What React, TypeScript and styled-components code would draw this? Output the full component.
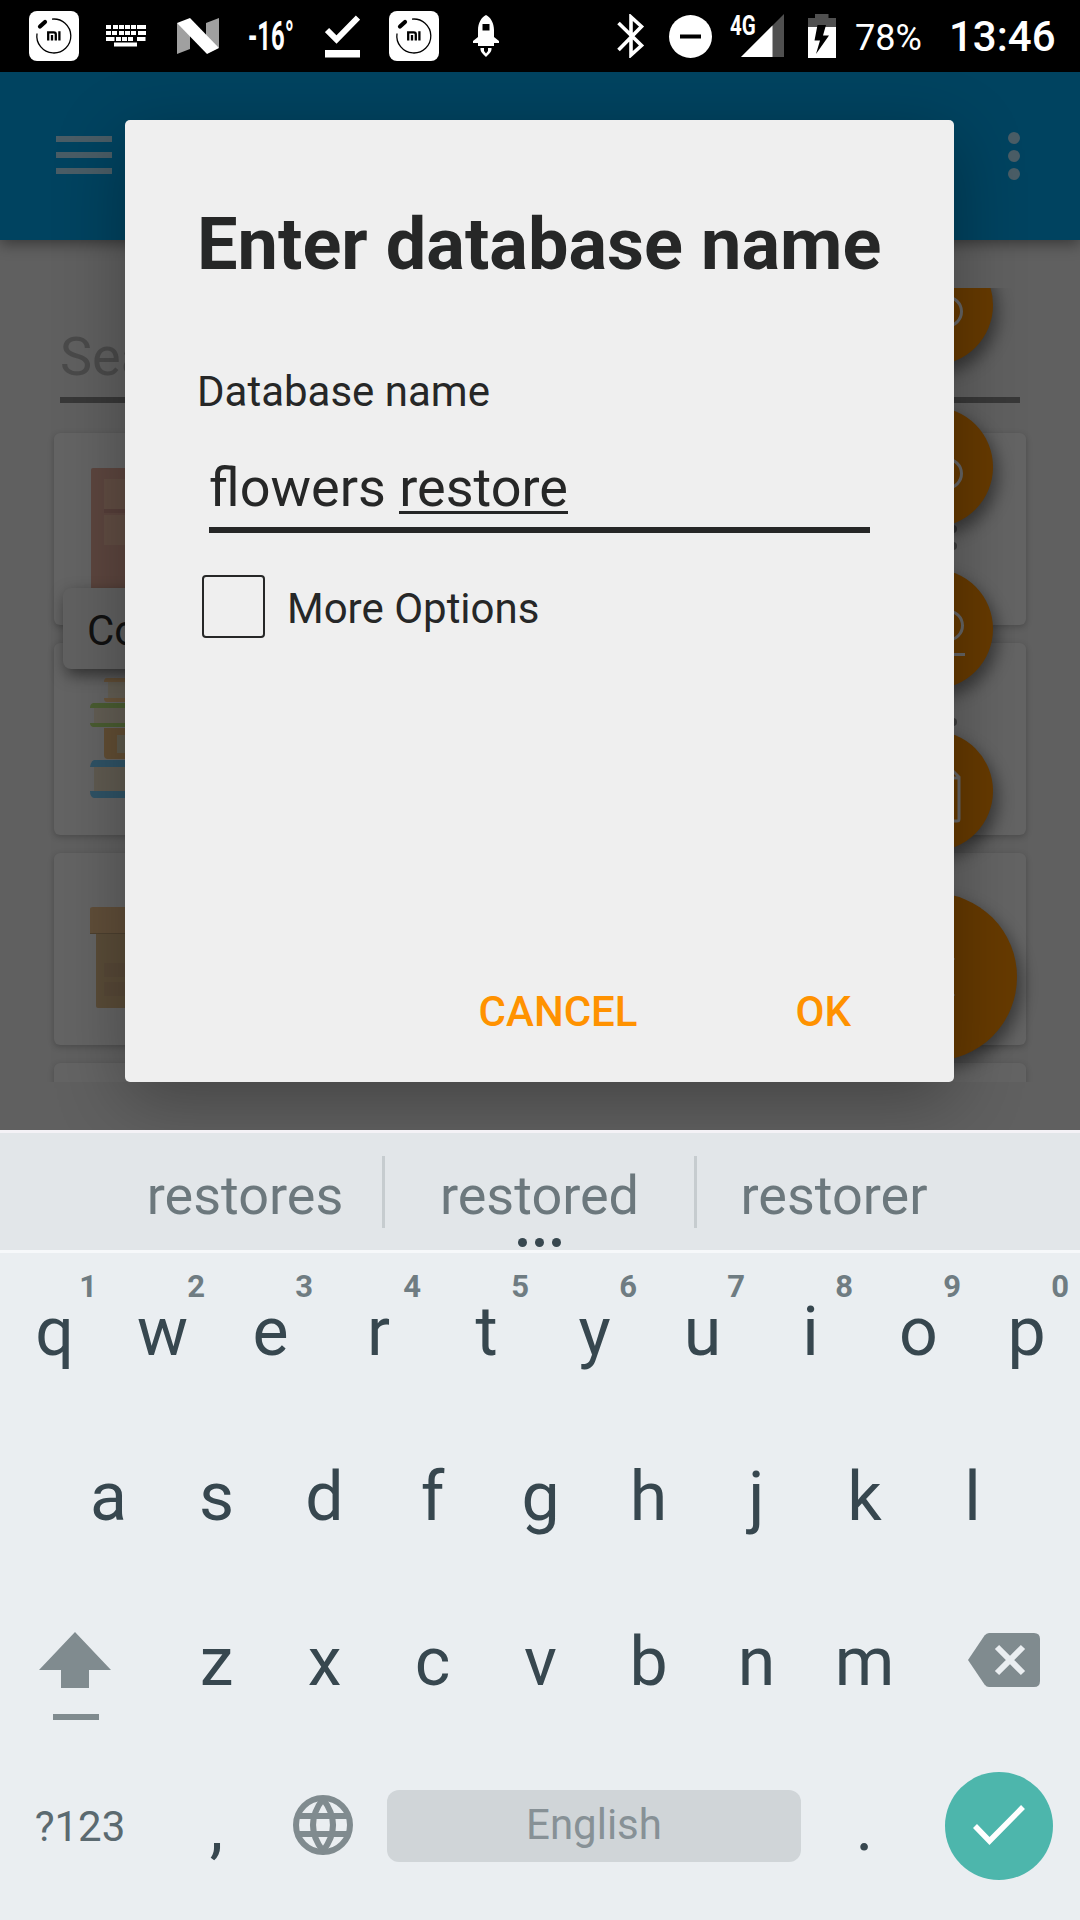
import React from "react";
import styled, { createGlobalStyle, css } from "styled-components";

const GlobalStyle = createGlobalStyle`
  * { box-sizing: border-box; }
  html, body { margin: 0; padding: 0; background: #000; }
  body { font-family: Roboto, "Noto Sans", sans-serif; overflow: hidden; }
`;

const Screen = styled.div`
  position: relative;
  width: 1080px;
  height: 1920px;
  display: flex;
  flex-direction: column;
  overflow: hidden;
`;

/* ---------- status bar ---------- */

const StatusBar = styled.header`
  flex: none;
  height: 72px;
  background: #000;
  color: #fff;
  display: flex;
  justify-content: space-between;
  padding: 0 25px 0 29px;
`;

const StatusGroup = styled.div`
  display: flex;
  align-items: center;
`;

const StatusIcon = styled.svg<{ $ml?: number }>`
  display: block;
  flex: none;
  margin-left: ${(p) => p.$ml ?? 0}px;
`;

const Temperature = styled.span`
  width: 45px;
  margin-left: 29px;
  font-size: 41px;
  font-weight: 700;
  line-height: 72px;
  white-space: nowrap;
  transform: scaleX(0.58);
  transform-origin: 0 50%;
`;

const Percent = styled.span`
  width: 79px;
  margin-left: 19px;
  font-size: 36px;
  line-height: 72px;
  padding-top: 3px;
`;

const Clock = styled.span`
  width: 106px;
  margin-left: 15px;
  font-size: 42px;
  font-weight: 500;
  line-height: 72px;
  padding-top: 2px;
  white-space: nowrap;
`;

const MiIcon = ({ ml }: { ml?: number }) => (
  <StatusIcon $ml={ml} width="50" height="50" viewBox="0 0 50 50">
    <rect width="50" height="50" rx="8" fill="#fff" />
    <path d="M23 8.1A17 17 0 1 1 8 22.5" fill="none" stroke="#000" strokeWidth="1.3" />
    <path d="M11 15.5 16 11" stroke="#000" strokeWidth="4.2" strokeLinecap="round" />
    <path d="M19.2 29.5V21.3h5.6q2 0 2 2v6.2M23 24v5.5M30.4 20.2v9.3" fill="none" stroke="#000" strokeWidth="2.3" />
  </StatusIcon>
);

const KeyboardIcon = () => (
  <StatusIcon $ml={27} width="40" height="22" viewBox="0 0 40 22" fill="#fff">
    {[0, 7, 13, 19, 25, 31].map((x) => (
      <rect key={x} x={x} y="0" width={x === 31 ? 9 : 5} height="4" />
    ))}
    {[0, 6, 13, 19, 25, 32].map((x) => (
      <rect key={x} x={x} y="6" width={x === 32 ? 8 : 5} height="4" />
    ))}
    {[0, 10, 16, 22, 31].map((x) => (
      <rect key={x} x={x} y="12" width={x === 0 || x === 31 ? 8.5 : 5} height="4" />
    ))}
    <rect x="8" y="17.5" width="23" height="4" />
  </StatusIcon>
);

const NougatIcon = () => (
  <StatusIcon $ml={31} width="42" height="36" viewBox="0 0 42 36">
    <path d="M0 5 13 11V31L0 36ZM29 5 42 0V30L29 22Z" fill="#a0a0a0" />
    <path d="M0 5 13 0 42 30 30 36Z" fill="#fff" />
  </StatusIcon>
);

const DownloadDoneIcon = () => (
  <StatusIcon $ml={32} width="35" height="43" viewBox="0 0 35 43">
    <path d="M2 15 11.5 24.5 33 2.5" fill="none" stroke="#fff" strokeWidth="6" />
    <rect y="35" width="35" height="7.5" fill="#fff" />
  </StatusIcon>
);

const RocketIcon = () => (
  <StatusIcon $ml={34} width="26" height="42" viewBox="0 0 26 42" fill="#fff">
    <path
      fillRule="evenodd"
      d="M13 0C17.5 2 21 8 21 15V22L26 26V28H21V31H5V28H0V26L5 22V15C5 8 8.500 2 13 0ZM9.500 9V15.500H16.500V9Z"
    />
    <path d="M7.500 33H11V36L13 38.500 15 36V33H18.500C19 37 15.500 39.500 13 42 10.500 39.500 7 37 7.500 33Z" />
  </StatusIcon>
);

const BluetoothIcon = () => (
  <StatusIcon width="28" height="44" viewBox="0 0 28 44">
    <path d="M1.500 9 24.500 31.500 14 41V3L24.500 12.500 1.500 36" fill="none" stroke="#fff" strokeWidth="3.600" />
  </StatusIcon>
);

const DndIcon = () => (
  <StatusIcon $ml={24} width="43" height="43" viewBox="0 0 43 43">
    <circle cx="21.500" cy="21.500" r="21.500" fill="#fff" />
    <rect x="11" y="19.500" width="21" height="4" fill="#000" />
  </StatusIcon>
);

const Network = styled.div`
  position: relative;
  width: 54px;
  height: 44px;
  margin-left: 18px;
  display: flex;
  justify-content: flex-end;
`;

const NetworkLabel = styled.span`
  position: absolute;
  left: 0;
  top: 2px;
  font-size: 27px;
  font-weight: 700;
  line-height: 20px;
  transform: scaleX(0.76);
  transform-origin: 0 0;
`;

const SignalIcon = () => (
  <StatusIcon width="43" height="44" viewBox="0 0 43 44">
    <path d="M43 0V43H0Z" fill="#505050" />
    <path d="M31.500 11.500V43H0Z" fill="#fff" />
  </StatusIcon>
);

const BatteryIcon = () => (
  <StatusIcon $ml={24} width="28" height="44" viewBox="0 0 28 44">
    <path d="M0 4H7V0H20.500V4H28V13H0Z" fill="#505050" />
    <rect y="13" width="28" height="31" fill="#fff" />
    <path d="M9.500 11H18L15 21.500H21L8 40 12 26.500H6.500Z" fill="#000" />
  </StatusIcon>
);

/* ---------- dimmed application ---------- */

const AppArea = styled.main`
  flex: none;
  position: relative;
  height: 1058px;
  background: #606060;
  display: flex;
  flex-direction: column;
  overflow: hidden;
`;

const AppBar = styled.div`
  flex: none;
  position: relative;
  height: 168px;
  padding: 0 60px 0 56px;
  background: #004360;
  box-shadow: 0 4px 14px rgba(0, 0, 0, 0.42);
  display: flex;
  justify-content: space-between;
`;

const Hamburger = styled.div`
  display: flex;
  flex-direction: column;
  gap: 10px;
  padding-top: 64px;
`;

const HamburgerLine = styled.span`
  width: 56px;
  height: 6px;
  background: #4a5d66;
`;

const Kebab = styled.div`
  display: flex;
  flex-direction: column;
  gap: 6px;
  padding-top: 60px;
`;

const KebabDot = styled.span`
  width: 12px;
  height: 12px;
  border-radius: 50%;
  background: #4a5d66;
`;

const SearchBox = styled.div`
  flex: none;
  height: 114px;
  margin: 49px 60px 0;
  padding: 36px 0 0;
  border-bottom: 6px solid #383838;
  font-size: 54px;
  line-height: 64px;
  color: #4a4a4a;
`;

const List = styled.div`
  flex: none;
  height: 679px;
  padding: 30px 54px 0;
  display: flex;
  flex-direction: column;
  gap: 18px;
  overflow: hidden;
`;

const Card = styled.div`
  flex: none;
  height: 192px;
  padding: 34px 69px 0 36px;
  border-radius: 6px;
  background: #646464;
  box-shadow: 0 2px 6px rgba(0, 0, 0, 0.22);
  display: flex;
  justify-content: space-between;
`;

const CardMenu = styled.div`
  display: flex;
  flex-direction: column;
  gap: 9px;
  padding-top: 41px;
`;

const CardDot = styled.span`
  width: 8px;
  height: 8px;
  border-radius: 50%;
  background: #3d3d3d;
`;

const CardArt = styled.svg`
  display: block;
  width: 126px;
  height: 126px;
`;

const CabinetArt = () => (
  <CardArt viewBox="0 0 126 126">
    <path d="M1 3q0-2 2-2h120v125H1z" fill="#5d463f" />
    <path d="M14 12h98v30H14zM14 48h98v30H14z" fill="#614d43" />
    <path d="M14 42h98v4H14z" fill="#573f3a" />
  </CardArt>
);

const BooksArt = () => (
  <CardArt viewBox="0 0 126 126">
    <path d="M18 1h90v24H18z" fill="#645f54" />
    <path d="M17 1h91v4H14q0-4 3-4zM14 21h94v4H17q-3 0-3-4z" fill="#6a553b" />
    <path d="M4 26h100v24H4z" fill="#635e54" />
    <path d="M3 26h103v5H0q0-4 3-5zM0 46h106v4H3q-3-1-3-4z" fill="#4a5d31" />
    <path d="M14 51h94v31H18q-4 0-4-4z" fill="#624e34" />
    <path d="M27 58h70v18H27z" fill="#5e5a4c" />
    <path d="M4 83h110v38H4z" fill="#605b51" />
    <path d="M4 83h114v7H0q1-6 4-7zM0 114h118v7H4q-4-1-4-7z" fill="#2f5366" />
  </CardArt>
);

const BoxArt = () => (
  <CardArt viewBox="0 0 126 126">
    <path d="M6 45h110v76H8q-2 0-2-2z" fill="#5a4c38" />
    <path d="M0 22q0-2 3-2h117v27H0z" fill="#604e39" />
    <path d="M0 46h120v1H0z" fill="#4d402f" />
    <path d="M14 76h98v14H14zM14 95h98v14H14z" fill="#574837" />
  </CardArt>
);

const Tooltip = styled.div`
  position: absolute;
  left: 63px;
  top: 516px;
  width: 300px;
  height: 81px;
  padding-left: 24px;
  border-radius: 8px;
  background: #616161;
  box-shadow: 3px 6px 15px rgba(0, 0, 0, 0.5);
  color: #111;
  font-size: 42px;
  line-height: 86px;
`;

/* floating action buttons, drawn over the card list */
const FabColumn = styled.div`
  position: absolute;
  top: 216px;
  right: 0;
  width: 260px;
  height: 794px;
  display: flex;
  flex-direction: column;
  align-items: center;
  gap: 42px;
  overflow: hidden;
  padding: 0 34px 0 0;
`;

const Fab = styled.div<{ $large?: boolean; $first?: boolean }>`
  flex: none;
  width: ${(p) => (p.$large ? 168 : 120)}px;
  height: ${(p) => (p.$large ? 168 : 120)}px;
  margin-top: ${(p) => (p.$first ? -43 : 0)}px;
  border-radius: 50%;
  background: #663a00;
  box-shadow: 5px 8px 16px rgba(0, 0, 0, 0.42);
  display: flex;
  align-items: center;
  justify-content: center;
`;

const FabGlyph = styled.svg`
  display: block;
  width: 80px;
  height: 80px;
  fill: none;
  stroke: #666;
  stroke-width: 3;
`;

/* ---------- dialog ---------- */

const Dialog = styled.section`
  position: absolute;
  left: 125px;
  top: 120px;
  width: 829px;
  height: 962px;
  padding: 0 73px 0 72px;
  border-radius: 5px;
  background: #efefef;
  color: #262727;
  display: flex;
  flex-direction: column;
  box-shadow: 0 18px 70px rgba(0, 0, 0, 0.3);
`;

const DialogTitle = styled.h1`
  margin: 83px 0 0;
  font-size: 72px;
  font-weight: 700;
  line-height: 84px;
  letter-spacing: 0.06px;
  white-space: nowrap;
`;

const FieldLabel = styled.label`
  margin-top: 80px;
  font-size: 42px;
  line-height: 50px;
`;

const Field = styled.div`
  height: 120px;
  margin: -4px 11px 0 12px;
  padding: 43px 0 0;
  border-bottom: 6px solid #262727;
  font-size: 54px;
  line-height: 64px;
  white-space: pre;
`;

const Composing = styled.span`
  display: inline-block;
  height: 58px;
  border-bottom: 3px solid #262727;
`;

const OptionRow = styled.div`
  display: flex;
  align-items: center;
  gap: 22px;
  margin: 40px 0 0 5px;
  font-size: 42px;
  line-height: 63px;
`;

const Checkbox = styled.span`
  width: 63px;
  height: 63px;
  border: 2.5px solid #262727;
  border-radius: 4px;
`;

const OptionText = styled.span`
  padding-top: 4px;
`;

const Actions = styled.div`
  margin-top: auto;
  padding: 0 30px 45px 0;
  display: flex;
  justify-content: flex-end;
  gap: 158px;
`;

const ActionButton = styled.span`
  font-size: 42px;
  font-weight: 500;
  line-height: 50px;
  color: #ff9200;
`;

/* ---------- keyboard ---------- */

const Keyboard = styled.section`
  flex: 1;
  background: #eaeef1;
  display: flex;
  flex-direction: column;
`;

const Suggestions = styled.div`
  flex: none;
  position: relative;
  height: 123px;
  padding: 0 109px 0 108px;
  border-top: 3px solid #f4f2f6;
  border-bottom: 3px solid #f6f8fa;
  background: #e2e6e9;
  display: flex;
  align-items: flex-start;
`;

const Suggestion = styled.span<{ $divider?: boolean }>`
  flex: 1;
  height: 72px;
  margin-top: 23px;
  text-align: center;
  font-size: 54px;
  line-height: 80px;
  color: #6c787d;
  ${(p) =>
    p.$divider &&
    css`
      flex: 0 0 315px;
      border-left: 3px solid #c6cccf;
      border-right: 3px solid #c6cccf;
    `}
`;

const MoreDots = styled.div`
  position: absolute;
  left: 518px;
  bottom: 3px;
  display: flex;
  gap: 8px;
`;

const MoreDot = styled.span`
  width: 9px;
  height: 9px;
  border-radius: 50%;
  background: #37474f;
`;

const KeyRow = styled.div<{ $inset?: number }>`
  flex: none;
  height: 165px;
  padding: 0 ${(p) => p.$inset ?? 0}px;
  display: flex;
`;

const Key = styled.div<{ $w?: number }>`
  flex: none;
  position: relative;
  width: ${(p) => p.$w ?? 108}px;
  height: 165px;
  text-align: center;
  font-size: 68px;
  line-height: 80px;
  padding: 39px 0 0 1px;
  color: #37474f;
`;

const KeyHint = styled.span`
  position: absolute;
  right: 11px;
  top: 14px;
  font-size: 31px;
  font-weight: 700;
  line-height: 40px;
  color: #6f7c82;
`;

const SymbolsKey = styled(Key)`
  font-size: 42px;
  padding: 39px 2px 0 0;
  color: #5b6a70;
`;

const IconKey = styled.div<{ $w: number; $pl: number; $pt: number }>`
  flex: none;
  width: ${(p) => p.$w}px;
  padding: ${(p) => p.$pt}px 0 0 ${(p) => p.$pl}px;
`;

const KeyIcon = styled.svg`
  display: block;
`;

const SpaceKey = styled.div`
  flex: none;
  width: 414px;
  height: 72px;
  margin: 42px 0 0 9px;
  border-radius: 12px;
  background: #d0d5d8;
  color: #879196;
  font-size: 42px;
  line-height: 69px;
  text-align: center;
`;

const DoneKey = styled.div`
  width: 108px;
  height: 108px;
  border-radius: 50%;
  background: #4db6ac;
`;

const topRow = "qwertyuiop".split("");

export default function App() {
  return (
    <Screen>
      <GlobalStyle />
      <StatusBar>
        <StatusGroup>
          <MiIcon />
          <KeyboardIcon />
          <NougatIcon />
          <Temperature>-16°</Temperature>
          <DownloadDoneIcon />
          <MiIcon ml={29} />
          <RocketIcon />
        </StatusGroup>
        <StatusGroup>
          <BluetoothIcon />
          <DndIcon />
          <Network>
            <NetworkLabel>4G</NetworkLabel>
            <SignalIcon />
          </Network>
          <BatteryIcon />
          <Percent>78%</Percent>
          <Clock>13:46</Clock>
        </StatusGroup>
      </StatusBar>

      <AppArea>
        <AppBar>
          <Hamburger>
            <HamburgerLine />
            <HamburgerLine />
            <HamburgerLine />
          </Hamburger>
          <Kebab>
            <KebabDot />
            <KebabDot />
            <KebabDot />
          </Kebab>
        </AppBar>
        <SearchBox>Search</SearchBox>
        <List>
          {[CabinetArt, BooksArt, BoxArt, null].map((Art, i) => (
            <Card key={i}>
              {Art && <Art />}
              {Art && (
                <CardMenu>
                  <CardDot />
                  <CardDot />
                  <CardDot />
                </CardMenu>
              )}
            </Card>
          ))}
        </List>
        <Tooltip>Co</Tooltip>
        <FabColumn>
          <Fab $first>
            <FabGlyph viewBox="0 0 80 80">
              <circle cx="54" cy="46.600" r="14.500" />
            </FabGlyph>
          </Fab>
          <Fab>
            <FabGlyph viewBox="0 0 80 80">
              <circle cx="54" cy="46.600" r="14.500" />
            </FabGlyph>
          </Fab>
          <Fab>
            <FabGlyph viewBox="0 0 80 80">
              <circle cx="55" cy="36.500" r="14.500" />
              <path d="M20 65.500H72" />
            </FabGlyph>
          </Fab>
          <Fab>
            <FabGlyph viewBox="0 0 80 80">
              <path d="M58 18 66 26V68q0 2-2 2H16V27H66" />
            </FabGlyph>
          </Fab>
          <Fab $large>
            <FabGlyph viewBox="0 0 80 80">
              <path d="M21 21 61 59M61 21 21 59" />
            </FabGlyph>
          </Fab>
        </FabColumn>
      </AppArea>

      <Dialog>
        <DialogTitle>Enter database name</DialogTitle>
        <FieldLabel>Database name</FieldLabel>
        <Field>
          flowers <Composing>restore</Composing>
        </Field>
        <OptionRow>
          <Checkbox />
          <OptionText>More Options</OptionText>
        </OptionRow>
        <Actions>
          <ActionButton>CANCEL</ActionButton>
          <ActionButton>OK</ActionButton>
        </Actions>
      </Dialog>

      <Keyboard>
        <Suggestions>
          <Suggestion>restores</Suggestion>
          <Suggestion $divider>restored</Suggestion>
          <Suggestion>restorer</Suggestion>
          <MoreDots>
            <MoreDot />
            <MoreDot />
            <MoreDot />
          </MoreDots>
        </Suggestions>
        <KeyRow>
          {topRow.map((k, i) => (
            <Key key={k}>
              {k}
              <KeyHint>{(i + 1) % 10}</KeyHint>
            </Key>
          ))}
        </KeyRow>
        <KeyRow $inset={54}>
          {"asdfghjkl".split("").map((k) => (
            <Key key={k}>{k}</Key>
          ))}
        </KeyRow>
        <KeyRow>
          <IconKey $w={162} $pl={39} $pt={49}>
            <KeyIcon width="72" height="90" viewBox="0 0 72 90" fill="#808b8f">
              <path d="M36 0 72 38H50V56H22V38H0ZM14 82H60V88H14Z" />
            </KeyIcon>
          </IconKey>
          {"zxcvbnm".split("").map((k) => (
            <Key key={k}>{k}</Key>
          ))}
          <IconKey $w={162} $pl={50} $pt={50}>
            <KeyIcon width="72" height="54" viewBox="0 0 72 54">
              <path d="M0 27 16.500 2.500Q18.500 0 21 0H66Q72 0 72 6V48Q72 54 66 54H21Q18.500 54 16.500 51.500Z" fill="#808b8f" />
              <path d="M29 14 55 40M55 14 29 40" stroke="#eaeef1" strokeWidth="6" />
            </KeyIcon>
          </IconKey>
        </KeyRow>
        <KeyRow>
          <SymbolsKey $w={162}>?123</SymbolsKey>
          <Key>,</Key>
          <IconKey $w={108} $pl={23} $pt={47}>
            <KeyIcon width="60" height="60" viewBox="0 0 60 60" fill="none" stroke="#808b8f" strokeWidth="6">
              <circle cx="30" cy="30" r="27" />
              <path d="M4 21H56M4 39H56M30 4Q10 30 30 56Q50 30 30 4" />
            </KeyIcon>
          </IconKey>
          <SpaceKey>English</SpaceKey>
          <Key $w={126}>.</Key>
          <IconKey $w={153} $pl={18} $pt={24}>
            <DoneKey>
              <KeyIcon width="108" height="108" viewBox="0 0 108 108">
                <path d="M30 54 44.500 69 78 35" fill="none" stroke="#fff" strokeWidth="5.500" />
              </KeyIcon>
            </DoneKey>
          </IconKey>
        </KeyRow>
      </Keyboard>
    </Screen>
  );
}
